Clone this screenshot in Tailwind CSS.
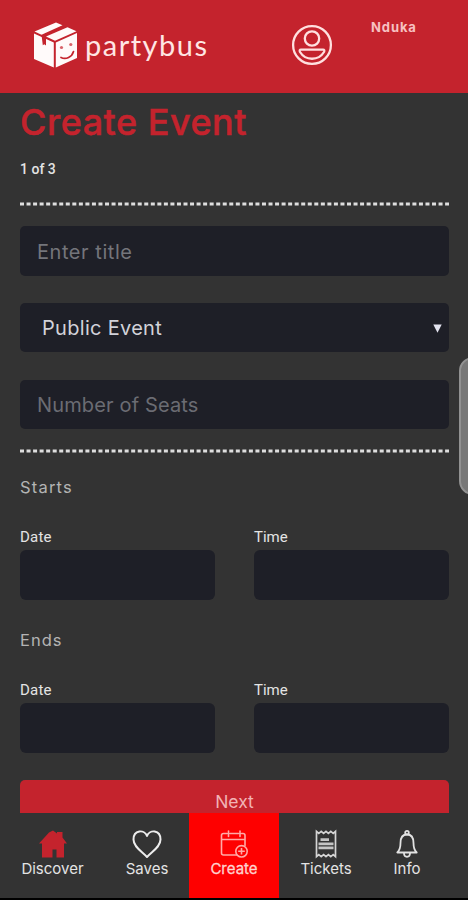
<!DOCTYPE html>
<html lang="en">
<head>
<meta charset="utf-8">
<meta name="viewport" content="width=device-width, initial-scale=1">
<title>Create Event</title>
<script src="https://cdn.jsdelivr.net/npm/@tailwindcss/browser@4"></script>
</head>
<body class="bg-black">
<div class="relative flex h-[900px] w-[468px] flex-col overflow-hidden bg-[#333333] font-['Inter',sans-serif] text-[#e4e4e4]">
  <header class="flex h-[93px] shrink-0 bg-[#c4232d]">
    <div class="flex items-start pt-[22px] pl-[33px]">
      <svg class="h-[46px] w-[45px]" viewBox="0 0 45 46">
        <path fill="#fffafa" d="M1 11.500 20.800 20.500V45.500L1 37ZM22.800 20.500 44 11V36L22.800 45.500ZM1.500 9.500 23 .5 29.500 3.200 8.500 12.700ZM13 14.600 34.500 5.200 43.500 9.300 22 18.700Z"/>
        <path fill="#c4232d" d="M8.500 12.700 13 14.800V23.500L11.300 22.200 9.800 23.200Z"/>
        <path fill="none" stroke="#c4232d" stroke-width="1.700" stroke-linecap="round" d="M28 35.500C33 38 39 35 40.500 29.500"/>
        <circle cx="28.500" cy="25.500" r="1.600" fill="#d8636a"/><circle cx="37.800" cy="22.500" r="1.600" fill="#d8636a"/>
      </svg>
      <span class="ml-[7px] mt-[6px] w-[125px] font-['Lato',sans-serif] text-[29px] leading-[34px] tracking-[1.500px] whitespace-nowrap text-[#ffe6e4]">partybus</span>
    </div>
    <svg class="mt-[24px] ml-[81px] size-[42px]" viewBox="0 0 42 42" fill="none" stroke="#ffe0df" stroke-width="2.300">
      <circle cx="21" cy="21" r="18.900"/><circle cx="21" cy="14.500" r="7.200"/>
      <path stroke-linejoin="round" d="M10 25.700H32Q34 25.700 33 28C27.500 37 14.500 37 9 28Q8 25.700 10 25.700Z"/>
    </svg>
    <span class="mt-[18px] ml-[38px] text-[13px] leading-[19px] font-bold tracking-[0.900px] text-[#f7c0c1]">Nduka</span>
  </header>

  <main class="h-[720px] shrink-0 overflow-hidden pr-[19px] pl-[20px]">
    <h1 class="mt-[7px] h-[44px] text-[36px] leading-[44px] font-medium tracking-[0.500px] whitespace-nowrap text-[#c4232d] [-webkit-text-stroke:0.5px_#c4232d]">Create Event</h1>
    <p class="mt-[15px] font-['Roboto',sans-serif] text-[14px] leading-[20px] font-medium">1 of 3</p>
    <svg class="mt-[23px] block h-[4px] w-[429px]" viewBox="0 0 429 4"><path d="M0 2H429" stroke="#dedede" stroke-width="2.800" stroke-dasharray="4 2.540"/></svg>
    <div class="mt-[20px] flex h-[50px] items-center rounded-[5px] bg-[#1e1f27] pt-[2px] pl-[17px] text-[20px] tracking-[0.550px] text-[#74757b]">Enter title</div>
    <div class="mt-[27px] flex h-[49px] items-center justify-between rounded-[5px] bg-[#1e1f27] pt-[1px] pr-[7px] pl-[22px] text-[20px] tracking-[0.300px] text-[#d2d2d9]">
      <span>Public Event</span>
      <svg class="h-[9px] w-[9px]" viewBox="0 0 9 9"><path fill="#e3e3ef" d="M.3.500H8.700L4.500 8.800Z"/></svg>
    </div>
    <div class="mt-[28px] flex h-[49px] items-center rounded-[5px] bg-[#1e1f27] pt-[1px] pl-[17px] text-[20px] tracking-[0.150px] text-[#6b6c73]">Number of Seats</div>
    <svg class="mt-[20px] block h-[4px] w-[429px]" viewBox="0 0 429 4"><path d="M0 2H429" stroke="#dedede" stroke-width="2.800" stroke-dasharray="4 2.540"/></svg>

    <h2 class="mt-[23px] text-[16.500px] leading-[22px] tracking-[1.200px] text-[#b4b4b4]">Starts</h2>
    <div class="mt-[29px] grid grid-cols-[195px_195px] gap-x-[39px] font-['Roboto',sans-serif]">
      <div><p class="h-[23px] text-[15px] leading-[20px] tracking-[0.200px]">Date</p><div class="h-[50px] rounded-[6px] bg-[#1e1f27]"></div></div>
      <div><p class="h-[23px] text-[15px] leading-[20px]">Time</p><div class="h-[50px] rounded-[6px] bg-[#1e1f27]"></div></div>
    </div>
    <h2 class="mt-[29px] text-[16.500px] leading-[22px] tracking-[1px] text-[#b4b4b4]">Ends</h2>
    <div class="mt-[29px] grid grid-cols-[195px_195px] gap-x-[39px] font-['Roboto',sans-serif]">
      <div><p class="h-[23px] text-[15px] leading-[20px] tracking-[0.200px]">Date</p><div class="h-[50px] rounded-[6px] bg-[#1e1f27]"></div></div>
      <div><p class="h-[23px] text-[15px] leading-[20px]">Time</p><div class="h-[50px] rounded-[6px] bg-[#1e1f27]"></div></div>
    </div>
    <div class="mt-[27px] flex h-[45px] items-center justify-center rounded-[5px] bg-[#c4232d] text-[17.500px] text-[#f2b3b5]">Next</div>
  </main>

  <nav class="grid h-[85px] shrink-0 grid-cols-[105px_84px_90px_94px_68px] text-[15px] leading-[20px]">
    <div class="flex flex-col items-center pt-[16px]">
      <svg class="size-[30px]" viewBox="0 0 30 30"><path fill="#c4232d" d="M1 14.500 11 3.500 15 1.500 19 4.500V3H24.500V8.500L29 14.500H26V28.500H18.500V20.500H14.500V28.500H4V14.500Z"/></svg>
      <span>Discover</span>
    </div>
    <div class="flex flex-col items-center pt-[16px]">
      <svg class="size-[30px]" viewBox="0 0 30 30"><path fill="none" stroke="#ededed" stroke-width="2" stroke-linejoin="round" d="M15 7C12.500 .3 1.500 .5 1.500 10.500C1.500 18 10 22.500 15 28C20 22.500 28.500 18 28.500 10.500C28.500 .5 17.500 .3 15 7Z"/></svg>
      <span>Saves</span>
    </div>
    <div class="flex flex-col items-center bg-[#fe0000] pt-[16px] text-[#ffd3d0]">
      <svg class="size-[30px]" viewBox="0 0 30 30" fill="none" stroke="#ffaaa7" stroke-width="1.600">
        <path d="M17.500 26H4.500Q2.500 26 2.500 24V6.500Q2.500 4.500 4.500 4.500H8M11 4.500H19.500M22.500 4.500H24Q26 4.500 26 6.500V16.500M2.500 10.500H26M9.500 2V7.500M21 2V7.500" stroke-linecap="round"/>
        <circle cx="22.500" cy="22.300" r="5.700"/><path d="M22.500 19V25.600M19.200 22.300H25.800"/>
      </svg>
      <span class="[-webkit-text-stroke:0.3px_#ffd3d0]">Create</span>
    </div>
    <div class="flex flex-col items-center pt-[16px]">
      <svg class="size-[30px]" viewBox="0 0 30 30">
        <path fill="none" stroke="#d5d5d5" stroke-width="1.700" d="M5.500 2.300 7.800 4.300 10.200 2.300 12.600 4.300 15 2.300 17.400 4.300 19.800 2.300 22.200 4.300 24.500 2.300V27.700L22.200 25.700 19.800 27.700 17.400 25.700 15 27.700 12.600 25.700 10.200 27.700 7.800 25.700 5.500 27.700Z"/>
        <path stroke="#c4c4c4" stroke-width="2.700" d="M9.500 10.700H18M7.500 14.800H22.500M7.500 18.800H22.500"/>
      </svg>
      <span>Tickets</span>
    </div>
    <div class="flex flex-col items-center pt-[16px]">
      <svg class="size-[30px]" viewBox="0 0 30 30" fill="none" stroke="#e2e2e2" stroke-width="1.800" stroke-linejoin="round">
        <path d="M15 5.500C10 5.500 8.500 9.500 8.500 14C8.500 19 7.500 21.500 5.300 23.500H24.700C22.500 21.500 21.500 19 21.500 14C21.500 9.500 20 5.500 15 5.500Z"/>
        <circle cx="15" cy="3.700" r="1.800"/><path d="M12 24C12 29 18 29 18 24"/>
      </svg>
      <span>Info</span>
    </div>
  </nav>
  <div class="h-[2px] bg-black"></div>
  <div class="absolute top-[357px] left-[459px] h-[138px] w-[30px] rounded-[14px] border-2 border-[#929292] bg-[#787878]"></div>
</div>
</body>
</html>
